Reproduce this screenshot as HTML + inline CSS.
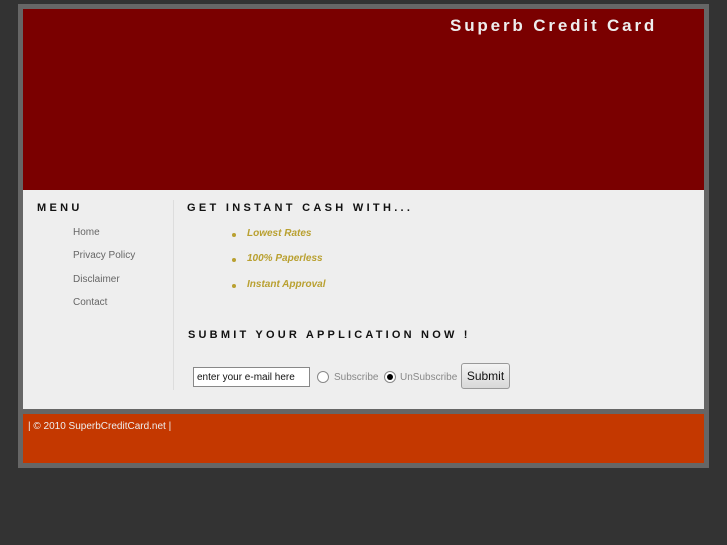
<!DOCTYPE html>
<html><head><meta charset="utf-8"><style>
*{margin:0;padding:0;box-sizing:border-box}
body{width:727px;height:545px;background:#333;font-family:"Liberation Sans",Arial,sans-serif;position:relative;overflow:hidden}
.outer{position:absolute;left:18px;top:4px;width:691px;height:464px;background:#666}
.hdr{position:absolute;left:23px;top:9px;width:681px;height:181px;background:#7a0000}
.title{position:absolute;left:450px;top:16px;color:#eee;font-size:17px;font-weight:bold;letter-spacing:2.85px;white-space:nowrap}
.content{position:absolute;left:23px;top:190px;width:681px;height:219px;background:#eee}
.foot{position:absolute;left:23px;top:414px;width:681px;height:49px;background:#c43800}
.h{position:absolute;font-size:11px;font-weight:bold;letter-spacing:3.3px;color:#111;white-space:nowrap}
.m{position:absolute;left:73px;font-size:10px;color:#666}
.divider{position:absolute;left:173px;top:200px;width:1px;height:190px;background:#ddd}
.b{position:absolute;left:232px;font-size:10px;color:#b9a030;font-weight:bold;font-style:italic;white-space:nowrap}
.b::before{content:"";position:absolute;left:0;top:5px;width:4px;height:4px;border-radius:50%;background:#b9a030}
.b span{margin-left:15px}
.r{position:absolute;width:12px;height:12px;border-radius:50%;border:1px solid #888;background:#fff}
</style></head><body>
<div class="outer"></div>
<div class="hdr"></div>
<div class="title">Superb Credit Card</div>
<div class="content"></div>
<div class="foot"></div>
<div class="h" style="left:37px;top:202px">MENU</div>
<div class="m" style="top:227px">Home</div>
<div class="m" style="top:250px">Privacy Policy</div>
<div class="m" style="top:274px">Disclaimer</div>
<div class="m" style="top:297px">Contact</div>
<div class="divider"></div>
<div class="h" style="left:187px;top:202px">GET INSTANT CASH WITH...</div>
<div class="b" style="top:228px"><span>Lowest Rates</span></div>
<div class="b" style="top:253px"><span>100% Paperless</span></div>
<div class="b" style="top:279px"><span>Instant Approval</span></div>
<div class="h" style="left:188px;top:329px;letter-spacing:3.2px;">SUBMIT YOUR APPLICATION NOW !</div>
<div style="position:absolute;left:193px;top:367px;width:117px;height:20px;border:1px solid #888;background:#fff;font-size:10px;padding:4px 3px;color:#111;white-space:nowrap">enter your e-mail here</div>
<div class="r" style="left:317px;top:371px"></div>
<div style="position:absolute;left:334px;top:372px;font-size:10px;color:#888">Subscribe</div>
<div class="r" style="left:384px;top:371px"><div style="position:absolute;left:2px;top:2px;width:6px;height:6px;border-radius:50%;background:#000"></div></div>
<div style="position:absolute;left:400px;top:372px;font-size:10px;color:#888">UnSubscribe</div>
<div style="position:absolute;left:461px;top:363px;width:49px;height:26px;border:1px solid #999;border-radius:3px;background:linear-gradient(#f4f4f4,#d8d8d8);font-size:12px;text-align:center;line-height:24px;color:#111">Submit</div>
<div style="position:absolute;left:28px;top:421px;font-size:10px;color:#eee;white-space:nowrap">| © 2010 SuperbCreditCard.net |</div>
</body></html>
